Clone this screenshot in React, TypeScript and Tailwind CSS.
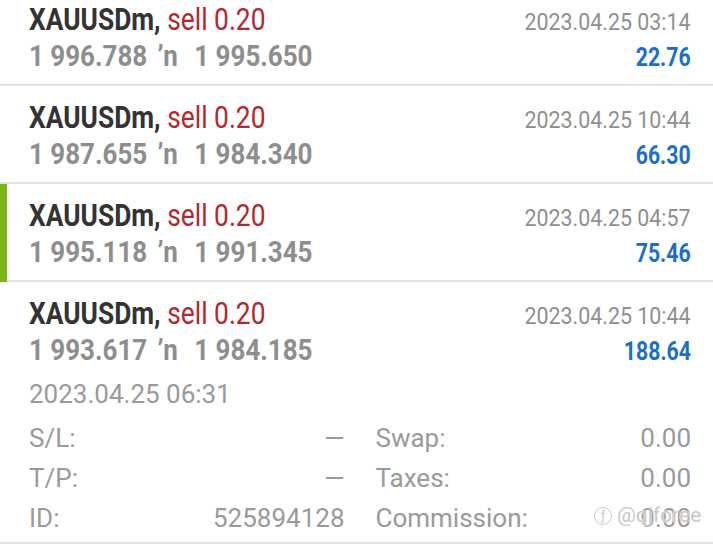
import React from "react";

const orders = [
  { open: "1 996.788", close: "1 995.650", time: "2023.04.25 03:14", profit: "22.76", active: false },
  { open: "1 987.655", close: "1 984.340", time: "2023.04.25 10:44", profit: "66.30", active: false },
  { open: "1 995.118", close: "1 991.345", time: "2023.04.25 04:57", profit: "75.46", active: true },
];

function OrderHead({ open, close, time, profit }: { open: string; close: string; time: string; profit: string }) {
  return (
    <div className="flex justify-between">
      <div className="flex flex-col">
        <div className="mt-[2px] h-[35px] text-[31px] leading-[35px] whitespace-nowrap origin-left scale-x-[0.85]">
          <span className="font-bold text-[#333333]">XAUUSDm,</span>{" "}
          <span className="text-[#b3282d]">sell 0.20</span>
        </div>
        <div className="mt-[1px] h-[35px] text-[30px] leading-[35px] font-bold text-[#8e8e8e] whitespace-nowrap origin-left scale-x-[0.865]">
          {open}
          <span className="ml-[12px] mr-[19px]">ʼn</span>
          {close}
        </div>
      </div>
      <div className="flex flex-col items-end">
        <div className="mt-[5px] h-[35px] text-[23px] leading-[35px] text-[#8f8f8f] whitespace-nowrap origin-right scale-x-[0.93]">
          {time}
        </div>
        <div className="h-[35px] text-[25px] leading-[35px] font-bold text-[#1b6fc6] whitespace-nowrap origin-right scale-x-[0.85]">
          {profit}
        </div>
      </div>
    </div>
  );
}

function DetailRow({ label, value }: { label: string; value: string }) {
  return (
    <div className="flex justify-between h-[40px] leading-[40px]">
      <span>{label}</span>
      <span>{value}</span>
    </div>
  );
}

export default function App() {
  return (
    <div className="w-[713px] h-[547px] overflow-hidden bg-white font-['Roboto',sans-serif] relative">
      <div className="-mt-[12px]">
        {orders.map((o, i) => (
          <div key={i} className="relative h-[98px] border-b-2 border-[#e4e4e4] pl-[29px] pr-[22px] pt-[12px]">
            {o.active && <div className="absolute left-0 top-0 bottom-[-2px] w-[7px] bg-[#7cb518]" />}
            <OrderHead {...o} />
          </div>
        ))}
        <div className="border-b-2 border-[#e4e4e4] pl-[29px] pr-[22px] pt-[12px] pb-[4px]">
          <OrderHead open="1 993.617" close="1 984.185" time="2023.04.25 10:44" profit="188.64" />
          <div className="mt-[5px] text-[26px] text-[#9a9a9a] leading-[40px] h-[40px]">2023.04.25 06:31</div>
          <div className="mt-[4px] grid grid-cols-2 gap-x-[31px] text-[26px] text-[#9a9a9a]">
            <div>
              <DetailRow label="S/L:" value="—" />
              <DetailRow label="T/P:" value="—" />
              <DetailRow label="ID:" value="525894128" />
            </div>
            <div>
              <DetailRow label="Swap:" value="0.00" />
              <DetailRow label="Taxes:" value="0.00" />
              <DetailRow label="Commission:" value="0.00" />
            </div>
          </div>
        </div>
      </div>
      <div className="absolute left-[594px] top-[500px] flex items-center gap-[5px] text-[21px] text-[#c8c8c8] [text-shadow:0_0_1px_#ffffff,0_0_2px_#ffffff]">
        <span className="w-[18px] h-[18px] rounded-full border border-[#c8c8c8] text-[12px] leading-[16px] text-center">ƒ</span>
        <span>@qjforee</span>
      </div>
    </div>
  );
}
